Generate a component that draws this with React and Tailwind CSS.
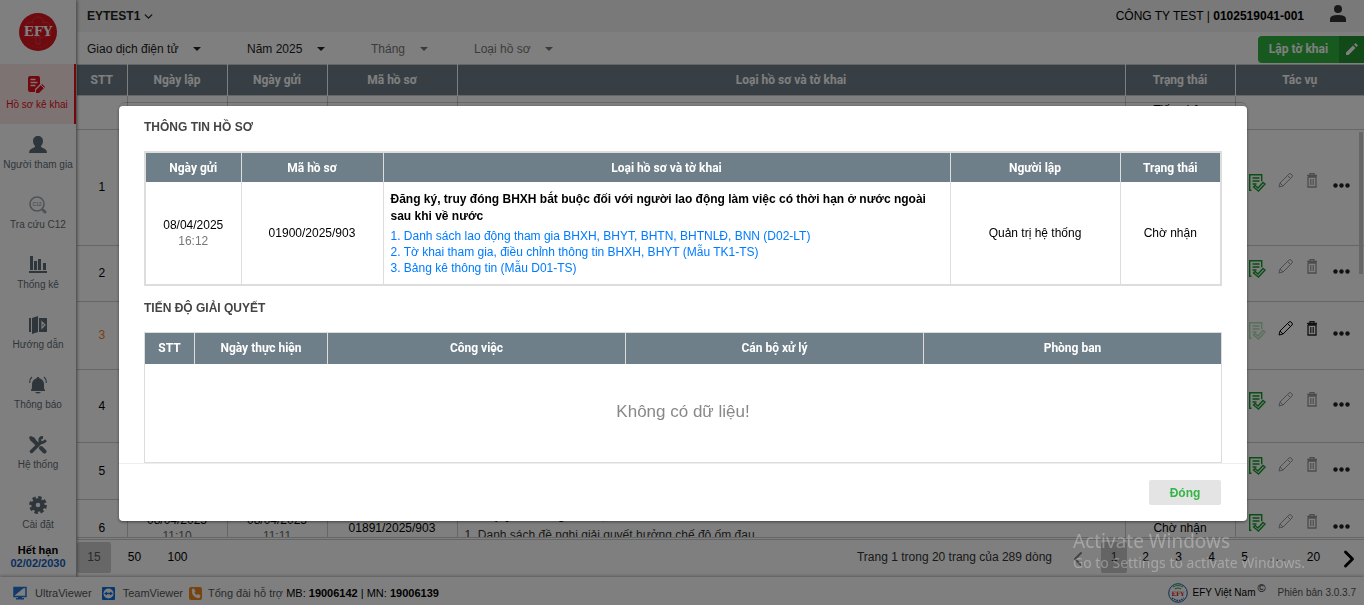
import { useState } from "react";
import { ChevronDown, ChevronLeft, ChevronRight } from "lucide-react";

const menu = [
    { icon: "file", label: "Hồ sơ kê khai", active: true },
    { icon: "user", label: "Người tham gia" },
    { icon: "search", label: "Tra cứu C12" },
    { icon: "chart", label: "Thống kê" },
    { icon: "book", label: "Hướng dẫn" },
    { icon: "bell", label: "Thông báo" },
    { icon: "tools", label: "Hệ thống" },
    { icon: "gear", label: "Cài đặt" },
];

const filters = [
    { name: "Giao dịch điện tử", width: "w-[114px]", color: "text-[#222]" },
    { name: "Năm 2025", width: "w-[78px]", color: "text-[#222]" },
    { name: "Tháng", width: "w-[57px]", color: "text-[#777]" },
    { name: "Loại hồ sơ", width: "w-[79px]", color: "text-[#777]" },
];

const rows = [
    { id: "", height: "h-[33px]", status: "Tiếp nhận", clipped: true },
    { id: 1, height: "h-[116px]" },
    { id: 2, height: "h-[56px]" },
    { id: 3, height: "h-[68px]", editable: true },
    { id: 4, height: "h-[73px]" },
    { id: 5, height: "h-[57px]" },
    {
        id: 6,
        height: "h-[57px]",
        created: ["08/04/2025", "11:10"],
        sent: ["08/04/2025", "11:11"],
        code: "01891/2025/903",
        title: "Giải quyết hưởng chế độ ốm đau",
        file: "1. Danh sách đề nghị giải quyết hưởng chế độ ốm đau",
        status: "Chờ nhận",
    },
];

const documents = [
    "1. Danh sách lao động tham gia BHXH, BHYT, BHTN, BHTNLĐ, BNN (D02-LT)",
    "2. Tờ khai tham gia, điều chỉnh thông tin BHXH, BHYT (Mẫu TK1-TS)",
    "3. Bảng kê thông tin (Mẫu D01-TS)",
];

const MenuIcon = ({ name }) => {
    const shapes = {
        file: (
            <>
                <path fill="currentColor" d="M2 0h8q2 0 2 2v6l-5 5v3H2q-2 0-2-2V2Q0 0 2 0Z" />
                <path stroke="#fce6e6" strokeWidth="1.4" d="M2.500 3.500h5M2.500 6.500h7M2.500 9.500h5" />
                <path fill="currentColor" d="m8 14 6-6 3 3-6 6H8Z" />
                <path stroke="#fce6e6" d="m13 9 3 3" />
            </>
        ),
        user: (
            <path fill="currentColor" d="M9 0c3 0 5 2 5 5 0 2-1 4-2 5v1l4 2q2 1 2 4H0q0-3 2-4l4-2v-1C5 9 4 7 4 5c0-3 2-5 5-5Z" />
        ),
        search: (
            <>
                <circle cx="8" cy="8" r="7" fill="none" stroke="currentColor" strokeWidth="1.6" />
                <path stroke="currentColor" strokeWidth="3" strokeLinecap="round" d="m14 14 2 2" />
                <text x="8" y="10" fontSize="5" fontWeight="bold" textAnchor="middle" fill="currentColor">C12</text>
            </>
        ),
        chart: (
            <path fill="currentColor" d="M1 0h3v14H1ZM5 5h3v9H5ZM9 3h3v11H9ZM14 7h3v7h-3ZM0 15h18v2H0Z" />
        ),
        book: (
            <>
                <path fill="currentColor" d="M0 2h2v14H0ZM3 2l6-2v16l-6 2ZM10 2h8v14h-8Z" />
                <path fill="none" stroke="#fff" strokeWidth="1.2" d="m13 6 3 3-3 3Z" />
            </>
        ),
        bell: (
            <>
                <path fill="currentColor" d="M8 1h2v1c3 1 5 3 5 6 0 4 0 5 1 6v1H2v-1c1-1 1-2 1-6 0-3 2-5 5-6ZM6 16h6q-3 3-6 0Z" />
                <path fill="none" stroke="currentColor" strokeWidth="1.2" d="M3 1Q.5 3 .7 7M15 1q2.500 2 2.300 6" />
            </>
        ),
        tools: (
            <>
                <path stroke="currentColor" strokeWidth="4" strokeLinecap="round" d="M3 3 8 8M12 12l3.500 3.500" />
                <path fill="currentColor" d="M0 1 2 0l4 2 1 4-2 1-4-3Z" />
                <path stroke="currentColor" strokeWidth="3.500" strokeLinecap="round" d="m2.500 15.500 9-9" />
                <path fill="none" stroke="currentColor" strokeWidth="2.8" d="M14 1.300q-4 0-3 4 2 3 6-1" />
            </>
        ),
        gear: (
            <>
                <circle cx="9" cy="9" r="4.500" fill="none" stroke="currentColor" strokeWidth="4.500" />
                <circle cx="9" cy="9" r="7.4" fill="none" stroke="currentColor" strokeWidth="3" strokeDasharray="3.4 2.41" />
            </>
        ),
    };

    return (
        <svg viewBox="0 0 18 18" className="size-[18px]" fill="none">
            {shapes[name]}
        </svg>
    );
};

const RowActions = ({ editable }) => (
    <div className="flex items-center pb-[9px] pl-3">
        <button aria-label="Kết quả" className={editable ? "text-[#35b548] opacity-40" : "text-[#149a2c]"}>
            <svg viewBox="0 0 18 18" className="size-[18px]" fill="none" stroke="currentColor" strokeWidth="1.4">
                <path d="M3.500 16.300H1.700V.7h12v6.500M4.500 4h7M4.500 7h7M4.500 10h4" />
                <path d="m5.500 13 1.500-1.500 3 2.500 5-5.500 2 1.500-6.500 7Z" />
            </svg>
        </button>
        <button aria-label="Sửa" className={editable ? "ml-3 text-black" : "ml-3 text-[#999]"}>
            <svg viewBox="0 0 15 15" className="mb-1 size-[15px]" fill="none" stroke="currentColor">
                <path d="m1 14 1-4 9-9q1-1 2 0l1 1q1 1 0 2l-9 9ZM9.500 2.500l3 3M2 10l3 3" />
            </svg>
        </button>
        <button aria-label="Xóa" className={editable ? "ml-[13px] text-[#222]" : "ml-[13px] text-[#999]"}>
            <svg viewBox="0 0 12 15" className="mb-1 h-[15px] w-3" fill="none" stroke="currentColor">
                <path strokeWidth="1.300" d="M1 2.500h10M4 2V.7h4V2M2 4v10h8V4H2" />
                <path strokeWidth="0.8" d="M4.500 6v6M6 6v6M7.500 6v6" />
            </svg>
        </button>
        <button aria-label="Thêm" className="ml-[15px] text-[#222]">
            <svg viewBox="0 0 17 5" className="mt-1.5 h-[5px] w-[17px]" fill="currentColor">
                <circle cx="2.500" cy="2.500" r="2.200" />
                <circle cx="8.500" cy="2.500" r="2.200" />
                <circle cx="14.500" cy="2.500" r="2.200" />
            </svg>
        </button>
    </div>
);

const Columns = () => (
    <colgroup>
        <col className="w-[50px]" />
        <col className="w-[100px]" />
        <col className="w-[100px]" />
        <col className="w-[130px]" />
        <col />
        <col className="w-[110px]" />
        <col className="w-[129px]" />
    </colgroup>
);

const Sidebar = () => (
    <aside className="z-10 flex w-[76px] shrink-0 flex-col bg-white text-center shadow-[1px_0_3px_rgba(0,0,0,0.5)]">
        <div className="flex h-16 shrink-0 items-center justify-center">
            <div className="relative flex size-[38px] items-center justify-center overflow-hidden rounded-full bg-[#dd1620]">
                <svg viewBox="0 0 38 38" className="absolute size-full" fill="none" stroke="#ee5a60" strokeWidth="0.5">
                    <path d="M19 4c4 0 6 3 5 6 5-2 8 2 7 6 3 5-1 8-5 7-2 3-5 2-7 0-2 2-5 3-7 0-4 1-8-2-5-7-1-4 2-8 7-6-1-3 1-6 5-6ZM17 23v8h4v-8" />
                    <path d="M8 30q11 9 22 0" strokeDasharray="1 1" />
                </svg>
                <span className="relative font-['DejaVu_Serif',serif] text-[13px] font-bold text-white">EFY</span>
            </div>
        </div>
        <nav className="flex flex-col">
            {menu.map((item) => (
                <a
                    key={item.icon}
                    href="#"
                    className={
                        item.active
                            ? "flex h-[60px] flex-col items-center gap-[3px] border-r-2 border-[#e0101c] bg-[#fce6e6] pt-3 text-[10px] leading-4 whitespace-nowrap text-[#e0101c]"
                            : "flex h-[60px] flex-col items-center gap-[3px] pt-3 text-[10px] leading-4 whitespace-nowrap text-[#5f6d76]"
                    }
                >
                    <span className={item.icon === "search" ? "opacity-60" : ""}>
                        <MenuIcon name={item.icon} />
                    </span>
                    <span>{item.label}</span>
                </a>
            ))}
        </nav>
        <p className="text-[11px] leading-[13px] font-bold text-black">Hết hạn</p>
        <p className="text-[11px] leading-[13px] font-bold text-[#1260b8]">02/02/2030</p>
    </aside>
);

const RecordTable = () => (
    <div className="flex min-h-0 flex-1 flex-col border-b border-[#ccc]">
        <table className="w-full table-fixed border-collapse bg-[#6f7f89] font-['Roboto',sans-serif] text-white">
            <Columns />
            <thead>
                <tr className="h-[31px] border-y border-[#ccc]">
                    {["STT", "Ngày lập", "Ngày gửi", "Mã hồ sơ", "Loại hồ sơ và tờ khai", "Trạng thái", "Tác vụ"].map((name) => (
                        <th key={name} className="border-r border-white p-0 font-bold last:border-r-0">
                            {name}
                        </th>
                    ))}
                </tr>
            </thead>
        </table>
        <div className="relative min-h-0 flex-1 overflow-hidden">
            <table className="w-full table-fixed border-collapse text-center leading-4 text-black">
                <Columns />
                <tbody className="[&_td]:border-r [&_td]:border-[#ccc] [&_td]:px-0 [&_td:last-child]:border-r-0">
                    {rows.map((row) => (
                        <tr key={row.id} className="border-b border-[#ccc]">
                            <td className={row.height}>
                                <span className={row.editable ? "text-[#f08020]" : ""}>{row.id}</span>
                            </td>
                            {[row.created, row.sent].map((date, i) => (
                                <td key={i}>
                                    {date && (
                                        <>
                                            {date[0]}
                                            <div className="text-[#666]">{date[1]}</div>
                                        </>
                                    )}
                                </td>
                            ))}
                            <td>{row.code}</td>
                            <td className="text-left">
                                {row.file && (
                                    <div className="px-[7px] pb-1.5">
                                        <p className="leading-[17px] font-bold">{row.title}</p>
                                        <p className="mt-[3px] text-[#333]">{row.file}</p>
                                    </div>
                                )}
                            </td>
                            <td className={row.clipped ? "pt-1.5 align-top" : ""}>{row.status}</td>
                            <td>{!row.clipped && <RowActions editable={row.editable} />}</td>
                        </tr>
                    ))}
                </tbody>
            </table>
            <div className="absolute top-9 right-px h-[142px] w-1 bg-[#ccc]" />
        </div>
    </div>
);

const Pagination = () => (
    <div className="mt-px flex h-[38px] shrink-0 items-center border-t border-[#ccc] pr-px pb-[3px] text-black">
        <button className="h-[31px] w-[34px] rounded-xs bg-[#cfcfcf] text-[#555]">15</button>
        <button className="ml-[13px] w-[21px]">50</button>
        <button className="ml-[22px] w-[21px]">100</button>
        <span className="ml-auto text-[#333]">Trang 1 trong 20 trang của 289 dòng</span>
        <button aria-label="Trang trước" className="mr-[11px] ml-3.5 pt-1 text-[#888]">
            <ChevronLeft size={24} />
        </button>
        <button className="h-[31px] w-[26px] rounded-xs bg-[#c8c8c8] text-[#333]">1</button>
        <div className="flex pl-0.5">
            {["2", "3", "4", "5", ". . ."].map((page) => (
                <button key={page} className="w-[33px]">
                    {page}
                </button>
            ))}
            <button className="w-[39px]">20</button>
        </div>
        <button aria-label="Trang sau" className="ml-0.5 pt-1">
            <ChevronRight size={28} strokeWidth={2.5} />
        </button>
    </div>
);

const StatusBar = () => (
    <footer className="z-10 flex h-7 shrink-0 items-center bg-white pt-1 pr-2 pl-[13px] text-[11px] text-[#555] shadow-[0_-1px_3px_rgba(0,0,0,0.3)]">
        <svg viewBox="0 0 14 14" className="mr-2 size-3.5">
            <path fill="none" stroke="#2476d8" strokeWidth="1.500" d="M1 1.500h12v9H1Z" />
            <path fill="#2476d8" d="M1 1h11L1 10ZM5 10h4v3H5ZM3 12h8v1.500H3Z" />
        </svg>
        <span>UltraViewer</span>
        <svg viewBox="0 0 13 13" className="mr-2 ml-2.5 size-[13px]">
            <rect width="13" height="13" rx="1" fill="#1470dc" />
            <circle cx="6.500" cy="6.500" r="5" fill="#fff" />
            <path fill="#1470dc" d="m2 6.500 3-2v1.300h3V4.500l3 2-3 2V7.200H5v1.300Z" />
        </svg>
        <span>TeamViewer</span>
        <svg viewBox="0 0 13 13" className="mr-1.5 ml-1.5 size-[13px]">
            <rect width="13" height="13" rx="2" fill="#ee8820" />
            <path fill="#fff" d="m3 2 2-.5 1.500 3L5.500 5.500q.5 2 2.500 2.500l1-1 2.500 1.500-.5 2Q9 12 6 10 2 7 3 2Z" />
        </svg>
        <span>
            Tổng đài hỗ trợ <span className="text-black">MB: <b>19006142</b> | MN: <b>19006139</b></span>
        </span>
        <div className="ml-auto flex items-center text-[10px]">
            <svg viewBox="0 0 20 20" className="mr-1 size-5">
                <circle cx="10" cy="10" r="9.300" fill="#fff" stroke="#1a5aa8" />
                <path fill="none" stroke="#30a840" strokeWidth="1.200" d="M5 4q5-3 10 0M7 6q3-2 6 0" />
                <path stroke="#1a5aa8" strokeWidth="1.500" strokeDasharray="1.500 1" fill="none" d="M4 15q6 5 12 0" />
                <text x="10" y="12.500" fontFamily="DejaVu Serif" fontSize="6" fontWeight="bold" textAnchor="middle" fill="#e01020">EFY</text>
            </svg>
            <span className="text-black">EFY Việt Nam</span>
            <sup className="ml-0.5 text-[11px] text-black">©</sup>
            <span className="ml-3">Phiên bản 3.0.3.7</span>
        </div>
    </footer>
);

const DetailModal = ({ onClose }) => (
    <div className="fixed inset-0 z-20 bg-black/50 pt-[102px] pr-[117px] pl-[119px]">
        <div className="rounded-t-md border-t border-black/20 pt-[3px]">
            <div role="dialog" aria-label="Thông tin hồ sơ" className="rounded-sm bg-white shadow-[0_1px_3px_rgba(0,0,0,0.5)]">
                <div className="px-[25px] pt-[13px]">
                    <h2 className="leading-4 font-bold text-[#444]">THÔNG TIN HỒ SƠ</h2>
                    <div className="mt-4 border-2 border-[#ddd]">
                        <table className="w-full table-fixed border-collapse text-center leading-4 text-black">
                            <colgroup>
                                <col className="w-[95px]" />
                                <col className="w-[142px]" />
                                <col />
                                <col className="w-[170px]" />
                                <col className="w-[100px]" />
                            </colgroup>
                            <thead className="font-['Roboto',sans-serif]">
                                <tr className="h-[29px] bg-[#6f7f89] text-white">
                                    {["Ngày gửi", "Mã hồ sơ", "Loại hồ sơ và tờ khai", "Người lập", "Trạng thái"].map((name) => (
                                        <th key={name} className="border-r border-[#ddd] p-0 last:border-r-0">
                                            {name}
                                        </th>
                                    ))}
                                </tr>
                            </thead>
                            <tbody>
                                <tr className="h-[102px] [&>td]:border-r [&>td]:border-[#ddd] [&>td:last-child]:border-r-0">
                                    <td>
                                        08/04/2025
                                        <div className="text-[#777]">16:12</div>
                                    </td>
                                    <td>01900/2025/903</td>
                                    <td className="px-[7px] text-left">
                                        <p className="leading-[17px] font-bold">
                                            Đăng ký, truy đóng BHXH bắt buộc đối với người lao động làm việc có thời hạn ở nước ngoài sau khi về nước
                                        </p>
                                        <ul className="mt-[3px]">
                                            {documents.map((doc) => (
                                                <li key={doc}>
                                                    <a href="#" className="text-[#007bff]">{doc}</a>
                                                </li>
                                            ))}
                                        </ul>
                                    </td>
                                    <td>Quản trị hệ thống</td>
                                    <td>Chờ nhận</td>
                                </tr>
                            </tbody>
                        </table>
                    </div>

                    <h2 className="mt-3.5 leading-4 font-bold text-[#444]">TIẾN ĐỘ GIẢI QUYẾT</h2>
                    <table className="mt-4 w-full table-fixed border-collapse border border-[#ddd] text-center">
                        <colgroup>
                            <col className="w-[50px]" />
                            <col className="w-[133px]" />
                            <col />
                            <col />
                            <col />
                        </colgroup>
                        <thead className="font-['Roboto',sans-serif]">
                            <tr className="h-[31px] bg-[#6f7f89] text-white">
                                {["STT", "Ngày thực hiện", "Công việc", "Cán bộ xử lý", "Phòng ban"].map((name) => (
                                    <th key={name} className="border-r border-[#ddd] p-0">
                                        {name}
                                    </th>
                                ))}
                            </tr>
                        </thead>
                        <tbody>
                            <tr className="h-[99px]">
                                <td colSpan={5} className="text-[17px] text-[#888]">Không có dữ liệu!</td>
                            </tr>
                        </tbody>
                    </table>
                </div>
                <div className="flex justify-end border-t border-[#eee] px-[26px] py-4">
                    <button
                        onClick={onClose}
                        className="h-[25px] w-[72px] rounded-xs bg-[#e4e4e4] font-bold text-[#35b548]"
                    >
                        Đóng
                    </button>
                </div>
            </div>
        </div>
    </div>
);

const App = () => {
    const [open, setOpen] = useState(true);

    return (
        <div className="flex h-screen flex-col overflow-hidden bg-white font-['Liberation_Sans',Arial,sans-serif] text-xs">
            <div className="flex min-h-0 flex-1">
                <Sidebar />
                <main className="flex min-w-0 flex-1 flex-col pl-px">
                    <header className="flex h-8 shrink-0 items-center bg-[#f2f2f2] pr-[18px] pl-2.5">
                        <button className="flex items-center gap-0.5 font-bold text-[#222]">
                            EYTEST1
                            <ChevronDown size={13} strokeWidth={2.5} />
                        </button>
                        <div className="ml-auto text-black">
                            CÔNG TY TEST | <b>0102519041-001</b>
                        </div>
                        <button aria-label="Tài khoản" className="ml-[26px] text-[#333]">
                            <svg viewBox="0 0 16 17" className="mb-1.5 h-[17px] w-4" fill="currentColor">
                                <circle cx="8" cy="4" r="4" />
                                <path d="M0 17v-3q0-4 8-4t8 4v3Z" />
                            </svg>
                        </button>
                    </header>

                    <div className="flex h-8 shrink-0 items-center gap-[46px] pt-0.5 pl-2.5">
                        {filters.map((filter) => (
                            <div key={filter.name} className={`relative ${filter.width} ${filter.color}`}>
                                <select aria-label={filter.name} className="w-full appearance-none bg-transparent">
                                    <option>{filter.name}</option>
                                </select>
                                <svg viewBox="0 0 8 4" className="pointer-events-none absolute top-1.5 right-0 h-1 w-2" fill="currentColor">
                                    <path d="M0 0h8L4 4Z" />
                                </svg>
                            </div>
                        ))}
                        <div className="ml-auto flex h-[27px] items-center overflow-hidden rounded-l-sm bg-[#30b23f] text-white">
                            <button className="w-[81px] font-['Roboto',sans-serif] font-bold">Lập tờ khai</button>
                            <button aria-label="Sửa tờ khai" className="flex h-full w-[25px] items-center justify-center bg-[#259232]">
                                <svg viewBox="0 0 12 12" className="size-3" fill="currentColor">
                                    <path d="M0 9.500 7 2.500 9.500 5l-7 7H0ZM8 1.500 9.500 0 12 2.500 10.500 4Z" />
                                </svg>
                            </button>
                        </div>
                    </div>

                    <RecordTable />
                    <Pagination />
                </main>
            </div>
            <StatusBar />

            {open && <DetailModal onClose={() => setOpen(false)} />}

            {/* Windows activation watermark */}
            <div className="pointer-events-none fixed right-[54px] bottom-8 z-30 w-[237px] font-['Noto_Sans',sans-serif] text-white/30">
                <p className="text-[19px] leading-6">Activate Windows</p>
                <p className="text-[14px] leading-5">Go to Settings to activate Windows.</p>
            </div>
        </div>
    );
};

export default App;
